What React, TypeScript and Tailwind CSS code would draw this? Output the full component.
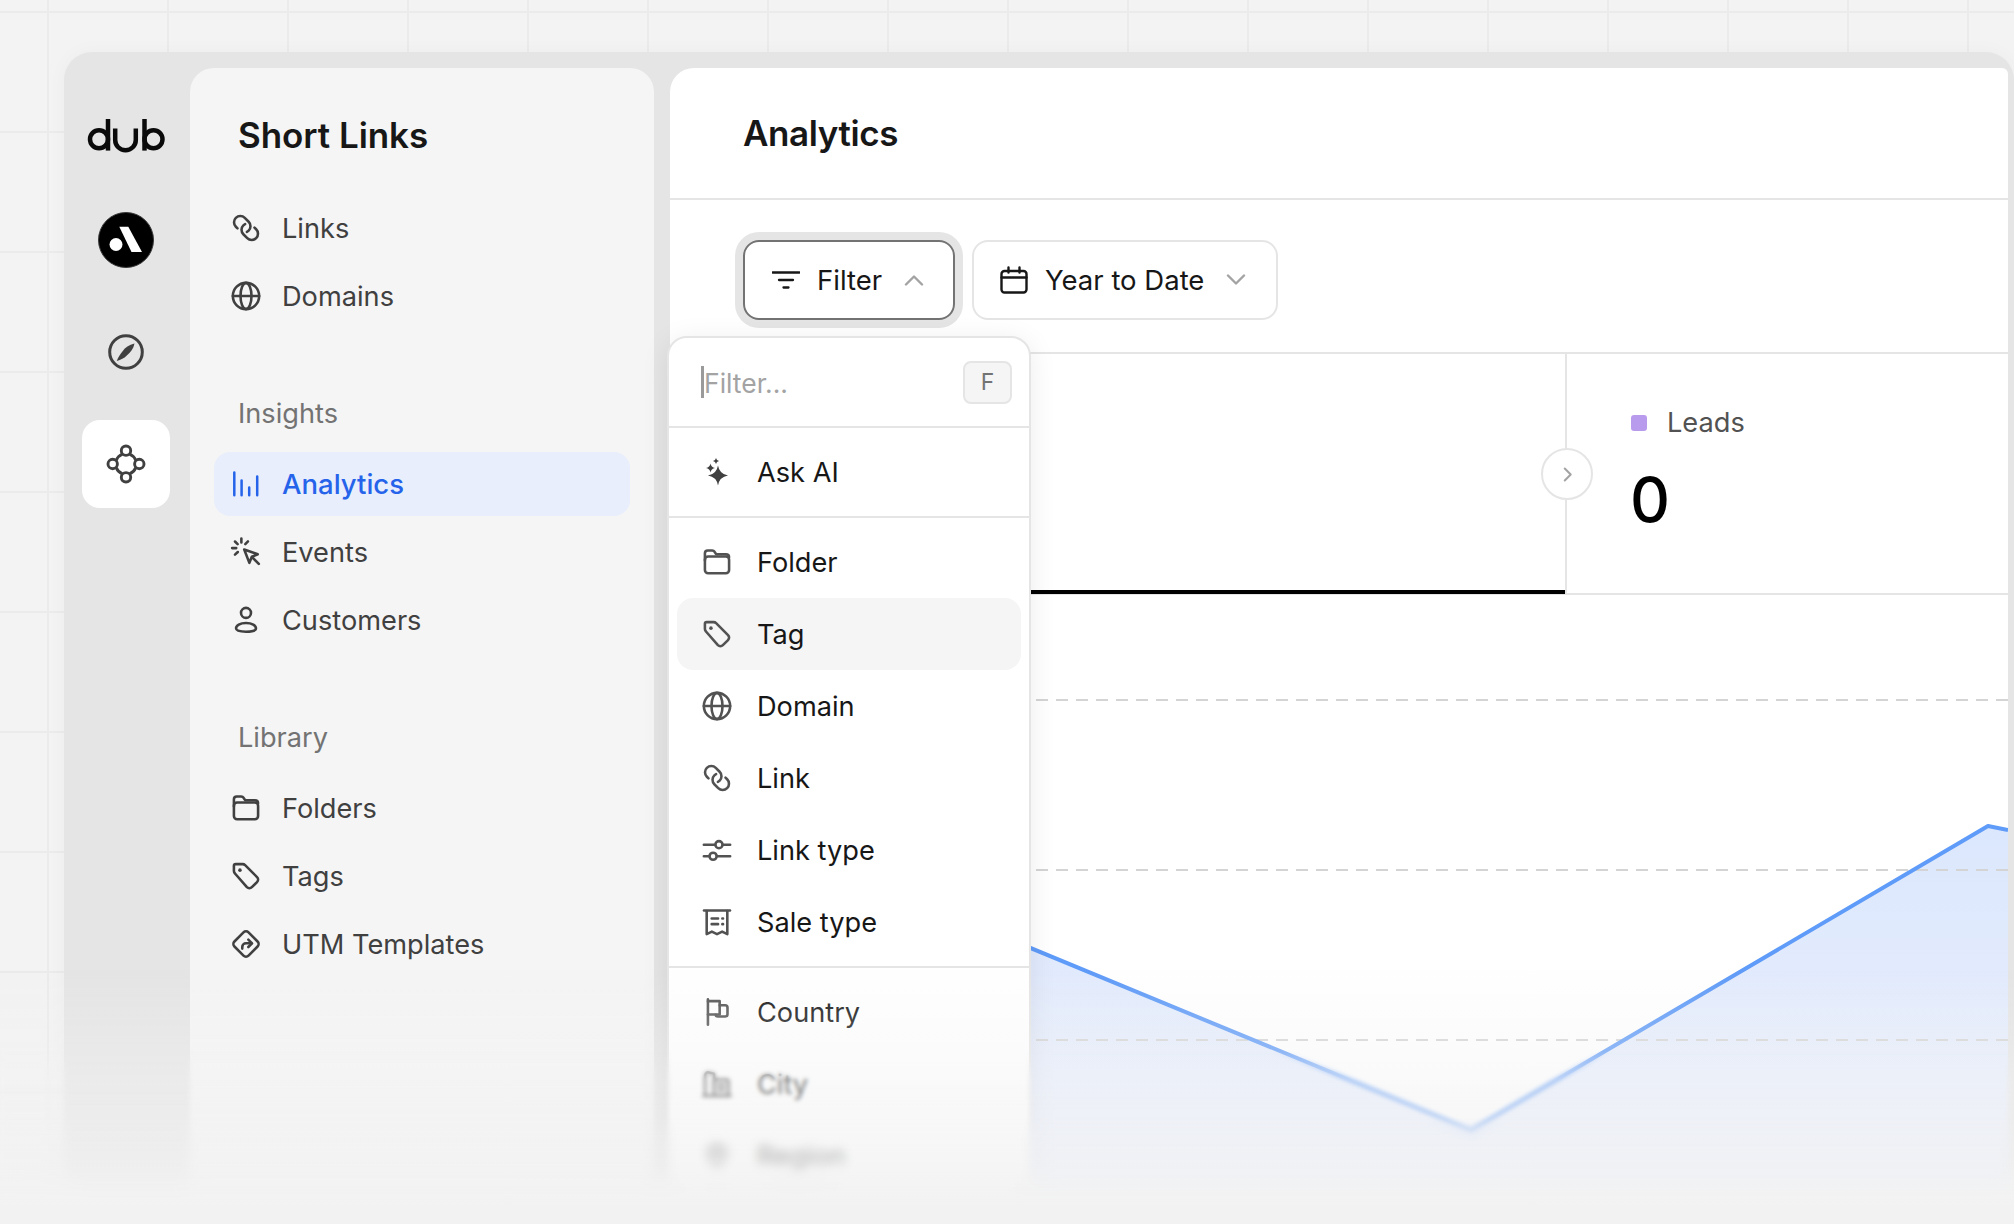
import type { ReactNode } from "react"

function Ico({ children, className = "" }: { children: ReactNode; className?: string }) {
  return (
    <svg
      viewBox="0 0 18 18"
      fill="none"
      stroke="currentColor"
      strokeWidth="1.45"
      strokeLinecap="round"
      strokeLinejoin="round"
      className={`h-8 w-8 shrink-0 ${className}`}
    >
      {children}
    </svg>
  )
}

const LinkIcon = () => (
  <Ico>
    <path d="M8.500 6.827c-.352.168-.682.398-.973.69l-.01.01c-1.381 1.381-1.381 3.619 0 5l2.175 2.175c1.381 1.381 3.619 1.381 5 0l.01-.01c1.381-1.381 1.381-3.619 0-5l-.931-.931" />
    <path d="M9.500 11.173c.352-.168.682-.398.973-.69l.01-.01c1.381-1.381 1.381-3.619 0-5L8.308 3.298c-1.381-1.381-3.619-1.381-5 0l-.01.01c-1.381 1.381-1.381 3.619 0 5l.931.931" />
  </Ico>
)
const GlobeIcon = () => (
  <Ico>
    <circle cx="9" cy="9" r="7.400" />
    <ellipse cx="9" cy="9" rx="3.100" ry="7.400" />
    <path d="M1.600 9h14.800" />
  </Ico>
)
const FolderIcon = () => (
  <Ico>
    <path d="M2.200 8V4.100c0-.9.7-1.600 1.600-1.600h2.500c.5 0 1 .2 1.300.7l.9 1.400H14c1 0 1.800.7 1.800 1.700" />
    <rect x="2.200" y="5.900" width="13.600" height="9.400" rx="1.800" />
  </Ico>
)
const TagIcon = () => (
  <Ico>
    <path d="M3.200 2.300h3.900c.5 0 1 .2 1.400.6l6.700 6.700c.8.8.8 2 0 2.800l-2.900 2.900c-.8.8-2 .8-2.800 0L2.800 7.600c-.4-.4-.6-.9-.6-1.400V3.300c0-.6.4-1 1-1Z" />
    <circle cx="5.600" cy="5.700" r="1" fill="currentColor" stroke="none" />
  </Ico>
)
const AnalyticsIcon = () => (
  <svg viewBox="0 0 32 32" fill="none" stroke="currentColor" strokeWidth="2.500" strokeLinecap="round" className="h-8 w-8 shrink-0">
    <path d="M4.300 4.500v22.800M11.600 12.500v14.800M19.200 19.500v7.800M27.200 8.500v18.800" />
  </svg>
)
const EventsIcon = () => (
  <Ico>
    <path d="M8 7.600 15.600 10.300 12.300 11.700 10.900 15.100Z" />
    <path d="M12.400 11.900 16.200 15.700" />
    <path d="M6.400 1.400v2.200M2.800 3.100l1.500 1.500M10.100 3l-1.500 1.600M1.200 6.800h2.300M2.800 10.500l1.600-1.500" />
  </Ico>
)
const UserIcon = () => (
  <Ico>
    <circle cx="9" cy="5" r="2.800" />
    <path d="M9 10.700c-3.400 0-5.600 1.400-5.600 3 0 1.100 1.600 1.900 5.600 1.900s5.600-.8 5.600-1.900c0-1.600-2.200-3-5.600-3Z" />
  </Ico>
)
const UtmIcon = () => (
  <Ico>
    <rect x="3.400" y="3.400" width="11.200" height="11.200" rx="2" transform="rotate(45 9 9)" />
    <path d="M6.900 11.600v-.9c0-1.200.9-2.100 2.100-2.100h3" />
    <path d="M10.300 6.500 12.400 8.600 10.300 10.700" />
  </Ico>
)
const SparkIcon = () => (
  <svg viewBox="0 0 32 32" fill="#404040" className="h-8 w-8 shrink-0">
    <path d="M17 9.600Q18.400 18.200 27 19.600 18.400 21 17 29.600 15.600 21 7 19.600 15.600 18.200 17 9.600Z" />
    <path d="M9.500 7.500Q10.200 11.300 14 12 10.200 12.700 9.500 16.500 8.800 12.700 5 12 8.800 11.300 9.500 7.500Z" />
    <path d="M15 2Q15.500 4.500 18 5 15.500 5.500 15 8 14.500 5.500 12 5 14.500 4.500 15 2Z" />
  </svg>
)
const SliderIcon = () => (
  <Ico>
    <path d="M1.600 6h6.300M12.400 6h4M1.600 12.500h2.900M9 12.500h7.400" />
    <circle cx="10.100" cy="6" r="2" />
    <circle cx="6.800" cy="12.500" r="2" />
  </Ico>
)
const ReceiptIcon = () => (
  <Ico>
    <path d="M1.700 2.500h14.600" />
    <path d="M3.200 2.800v13l2.900-1.400 2.900 1.400 2.900-1.400 2.900 1.400v-13" />
    <path d="M6 7h3.600M6 10.200h3.600M12 7h.4M12 10.200h.4" />
  </Ico>
)
const FlagIcon = () => (
  <Ico>
    <path d="M3.900 1.900v14.300" />
    <path d="M3.900 2.900h6.600v7.500H3.900" />
    <path d="M10.500 5.200h3.100c.8 0 1.300.5 1.300 1.300v3.700c0 .8-.5 1.300-1.300 1.300H9.300c-.6 0-1-.4-1-1" />
  </Ico>
)
const CityIcon = () => (
  <Ico>
    <path d="M2.300 15.500V4.200c0-1.200 1-2 2.100-1.700l3 .8v3.200" />
    <rect x="7.200" y="6.500" width="8.300" height="9" rx="1.200" />
    <path d="M1.300 15.700h15.400M9.500 9.500h3.700M9.500 12.300h3.700" />
  </Ico>
)
const PinIcon = () => (
  <Ico>
    <path d="M9 16c2.800-3 5-5.500 5-8.500a5 5 0 0 0-10 0c0 3 2.200 5.500 5 8.500Z" />
    <circle cx="9" cy="7.500" r="1.700" />
  </Ico>
)

function NavItem({ icon, label, active }: { icon: ReactNode; label: string; active?: boolean }) {
  return (
    <div
      className={`flex h-16 items-center gap-[20px] rounded-2xl pl-4 ${
        active ? "bg-[#e8eefb] text-[27.5px] font-medium text-[#2563eb]" : "text-[27.2px] font-normal text-[#404040]"
      }`}
    >
      {icon}
      <span className="pt-[2px]">{label}</span>
    </div>
  )
}

function MenuItem({ icon, label, hover }: { icon: ReactNode; label: string; hover?: boolean }) {
  return (
    <div
      className={`flex h-[72px] items-center gap-6 rounded-2xl pl-6 text-[27.2px] font-normal text-[#171717] ${
        hover ? "bg-[#f5f5f5]" : ""
      }`}
    >
      <span className="text-[#525252]">{icon}</span>
      <span className="pt-[2px]">{label}</span>
    </div>
  )
}

function FilterMenu() {
  return (
    <div className="absolute left-[-3px] top-[268px] z-10 h-[860px] w-[364px] overflow-hidden rounded-t-[20px] border-2 border-[#e5e5e5] bg-white shadow-[0_4px_28px_rgba(0,0,0,0.08)]">
      <div className="flex h-[90px] items-center border-b-2 border-[#e5e5e5] pl-[32px] pr-[17px]">
        <span className="h-8 w-[3px] bg-[#9a9a9a]" />
        <span className="flex-1 pt-[3px] text-[26.5px] text-[#a3a3a3]">Filter...</span>
        <span className="flex h-[43px] w-[49px] items-center justify-center rounded-lg border-2 border-[#e5e5e5] bg-[#f5f5f5] text-[23px] text-[#737373]">
          F
        </span>
      </div>
      <div className="border-b-2 border-[#e5e5e5] px-2 py-2">
        <MenuItem icon={<SparkIcon />} label="Ask AI" />
      </div>
      <div className="border-b-2 border-[#e5e5e5] px-2 py-2">
        <MenuItem icon={<FolderIcon />} label="Folder" />
        <MenuItem icon={<TagIcon />} label="Tag" hover />
        <MenuItem icon={<GlobeIcon />} label="Domain" />
        <MenuItem icon={<LinkIcon />} label="Link" />
        <MenuItem icon={<SliderIcon />} label="Link type" />
        <MenuItem icon={<ReceiptIcon />} label="Sale type" />
      </div>
      <div className="px-2 py-2">
        <MenuItem icon={<FlagIcon />} label="Country" />
        <MenuItem icon={<CityIcon />} label="City" />
        <MenuItem icon={<PinIcon />} label="Region" />
      </div>
    </div>
  )
}

function Chart() {
  return (
    <svg viewBox="0 0 1338 600" className="block h-[600px] w-[1338px]" fill="none">
      <defs>
        <linearGradient id="area" x1="0" y1="230" x2="0" y2="520" gradientUnits="userSpaceOnUse">
          <stop offset="0" stopColor="#dbe7fd" />
          <stop offset="1" stopColor="#e9effd" />
        </linearGradient>
      </defs>
      <path d="M0 204 801 535 1318 231 1338 235V600H0Z" fill="url(#area)" />
      <path d="M0 105H1338M0 275H1338M0 445H1338" stroke="#d4d4d4" strokeWidth="2" strokeDasharray="12 8" strokeDashoffset="-6" />
      <path d="M0 204 801 535 1318 231 1338 235" stroke="#5f9bf8" strokeWidth="4" strokeLinejoin="round" />
    </svg>
  )
}

export default function App() {
  return (
    <div className="relative h-[1224px] w-[2014px] overflow-hidden bg-[#f3f3f3] bg-[linear-gradient(to_right,#ebebeb_2px,transparent_2px),linear-gradient(to_bottom,#ebebeb_2px,transparent_2px)] bg-[size:120px_120px] bg-[position:47px_11px] pl-16 pt-[52px] [font-family:Inter,sans-serif]">
      <div className="flex h-[1142px] w-[1950px] rounded-[28px] bg-[#e5e5e5] pr-[6px] pt-4 shadow-[0_0_20px_rgba(0,0,0,0.03)]">
        {/* icon rail */}
        <div className="flex w-[126px] shrink-0 flex-col items-center pr-[2px]">
          <svg viewBox="0 0 88 40" fill="none" stroke="#0a0a0a" strokeWidth="4.500" className="ml-[2px] mt-[47px] h-10 w-[88px]">
            <circle cx="16" cy="24.300" r="9" />
            <path d="M25 4v31.600" />
            <path d="M32.200 13.500v11.500a10.300 10.300 0 0 0 20.600 0V13.500" />
            <circle cx="70.500" cy="24.300" r="9" />
            <path d="M61.500 4v31.600" />
          </svg>
          <svg viewBox="0 0 56 56" className="mt-[57px] h-14 w-14">
            <circle cx="28" cy="28" r="27.500" fill="#000" stroke="#3a3a3a" strokeWidth="1" />
            <circle cx="18" cy="32.500" r="6.500" fill="#fff" />
            <path d="M21.300 14.700h9L44 40H33.500Z" fill="#fff" />
          </svg>
          <svg viewBox="0 0 36 36" fill="none" className="mt-[66px] h-9 w-9">
            <circle cx="18" cy="18" r="16.300" stroke="#404040" strokeWidth="3" />
            <path d="M26.500 9.600C21 11 17 13.500 14.800 17 12.500 20 10 23 8.800 27 13 25.500 16 24.500 18.800 21.500 22.500 18.500 25.500 15 26.500 9.600Z" fill="#404040" />
          </svg>
          <div className="mt-[50px] flex h-[88px] w-[88px] items-center justify-center rounded-[18px] bg-white">
            <svg viewBox="0 0 40 40" fill="none" stroke="#404040" strokeWidth="2.900" className="h-10 w-10">
              <circle cx="20" cy="6.700" r="4.700" />
              <circle cx="6.700" cy="20" r="4.700" />
              <circle cx="33.300" cy="20" r="4.700" />
              <circle cx="20" cy="33.300" r="4.700" />
              <path d="M23.600 10.200Q28 12 29.800 16.400M29.800 23.600Q28 28 23.600 29.800M16.400 29.800Q12 28 10.200 23.600M10.200 16.400Q12 12 16.400 10.200" />
            </svg>
          </div>
        </div>

        {/* sidebar */}
        <div className="w-[464px] shrink-0 rounded-t-3xl bg-[#f5f5f5] px-6 pt-[45px]">
          <h1 className="h-11 pl-6 text-[35px] font-semibold leading-[44px] tracking-[-0.05px] text-[#171717]">Short Links</h1>
          <div className="mt-[39px] flex flex-col gap-1">
            <NavItem icon={<LinkIcon />} label="Links" />
            <NavItem icon={<GlobeIcon />} label="Domains" />
          </div>
          <div className="mb-5 mt-16 h-10 pl-6 pt-[2px] text-[27.2px] font-normal leading-10 text-[#737373]">Insights</div>
          <div className="flex flex-col gap-1">
            <NavItem icon={<AnalyticsIcon />} label="Analytics" active />
            <NavItem icon={<EventsIcon />} label="Events" />
            <NavItem icon={<UserIcon />} label="Customers" />
          </div>
          <div className="mb-5 mt-16 h-10 pl-6 pt-[2px] text-[27.2px] font-normal leading-10 text-[#737373]">Library</div>
          <div className="flex flex-col gap-1">
            <NavItem icon={<FolderIcon />} label="Folders" />
            <NavItem icon={<TagIcon />} label="Tags" />
            <NavItem icon={<UtmIcon />} label="UTM Templates" />
          </div>
        </div>

        {/* main */}
        <div className="relative ml-4 flex-1 rounded-tl-3xl rounded-tr-[6px] bg-white">
          <div className="flex h-[132px] items-center border-b-2 border-[#e5e5e5] pl-[73px]">
            <h2 className="text-[35px] font-semibold tracking-[-0.4px] text-[#171717]">Analytics</h2>
          </div>
          <div className="flex h-[154px] items-start gap-[17px] border-b-2 border-[#e5e5e5] pl-[73px] pt-10">
            <button className="flex h-20 w-[212px] items-center rounded-2xl border-2 border-[#737373] pl-[27px] text-[27.5px] font-normal text-[#171717] ring-8 ring-[#e5e5e5]">
              <svg viewBox="0 0 28 28" fill="none" stroke="#171717" strokeWidth="2.300" strokeLinecap="round" className="h-7 w-7 shrink-0">
                <path d="M.5 6.500h27M7 14h14M11.500 21.500h5" />
              </svg>
              <span className="ml-[17px] pt-[1px]">Filter</span>
              <svg viewBox="0 0 20 12" fill="none" stroke="#a3a3a3" strokeWidth="2.400" strokeLinecap="round" strokeLinejoin="round" className="ml-[22px] h-3 w-5">
                <path d="M2 10.500 10 2.500l8 8" />
              </svg>
            </button>
            <button className="flex h-20 w-[306px] items-center rounded-2xl border-2 border-[#e5e5e5] pl-[26px] text-[27.5px] font-normal text-[#171717]">
              <svg viewBox="0 0 28 28" fill="none" stroke="#171717" strokeWidth="2.400" strokeLinecap="round" className="h-7 w-7 shrink-0">
                <rect x="1.500" y="5" width="25" height="21.500" rx="3" />
                <path d="M1.500 11.500h25M8.500 1.500v5M19.500 1.500v5" />
              </svg>
              <span className="ml-[17px] pt-[1px]">Year to Date</span>
              <svg viewBox="0 0 20 12" fill="none" stroke="#a3a3a3" strokeWidth="2.400" strokeLinecap="round" strokeLinejoin="round" className="ml-[22px] h-3 w-5">
                <path d="M2 1.500 10 9.500l8-8" />
              </svg>
            </button>
          </div>
          <div className="flex h-[241px] border-b-2 border-[#e5e5e5]">
            <div className="relative w-[895px]">
              <div className="absolute bottom-[-1px] left-0 right-0 h-1 bg-black" />
            </div>
            <div className="relative w-[2px] bg-[#e5e5e5]">
              <div className="absolute left-[2px] top-[94px] flex h-[52px] w-[52px] -translate-x-1/2 items-center justify-center rounded-full border-2 border-[#e5e5e5] bg-white">
                <svg viewBox="0 0 12 18" fill="none" stroke="#a3a3a3" strokeWidth="2.200" strokeLinecap="round" strokeLinejoin="round" className="h-[17px] w-[11px]">
                  <path d="M3 2.500 9.500 9 3 15.500" />
                </svg>
              </div>
            </div>
            <div className="pl-16 pt-[49px]">
              <div className="flex h-10 items-center gap-5 text-[27.2px] font-normal text-[#525252]">
                <span className="h-4 w-4 rounded-[3px] bg-[#b99bee]" />
                <span>Leads</span>
              </div>
              <div className="-ml-px mt-[25px] text-[62px] font-medium leading-[64px] text-black">0</div>
            </div>
          </div>
          <Chart />
          <FilterMenu />
        </div>
      </div>

      {/* bottom fade */}
      <div className="absolute inset-x-0 bottom-0 top-[1050px] z-20 backdrop-blur-[2px] [mask-image:linear-gradient(to_bottom,transparent,black_30px)]" />
      <div className="absolute inset-x-0 bottom-0 top-[1115px] z-20 backdrop-blur-[5px] [mask-image:linear-gradient(to_bottom,transparent,black_30px)]" />
      <div className="absolute inset-x-0 bottom-0 top-[1165px] z-20 backdrop-blur-[10px] [mask-image:linear-gradient(to_bottom,transparent,black_20px)]" />
      <div className="absolute inset-x-0 bottom-0 top-[970px] z-30 bg-[linear-gradient(to_bottom,transparent,rgba(242,242,242,0.45)_114px,rgba(242,242,242,0.68)_186px,#f2f2f2_235px)]" />
    </div>
  )
}
